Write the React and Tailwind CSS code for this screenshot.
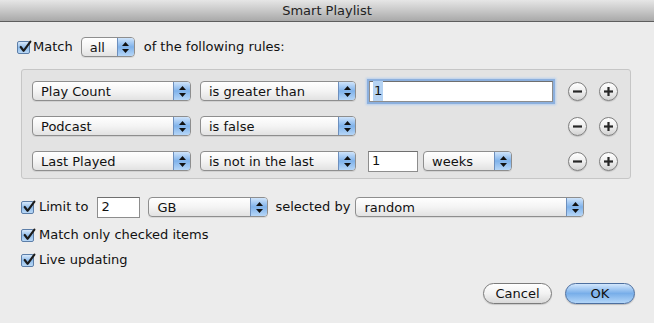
import React from 'react';

const font = { fontFamily: '"DejaVu Sans", "Liberation Sans", sans-serif' };

function Checkbox() {
  return (
    <div className="w-[13px] h-[13px] shrink-0 rounded-[2px] border border-[#5c7ea8] bg-gradient-to-b from-[#d8e9fb] via-[#8fbcea] to-[#b9d8f6] relative">
      <svg viewBox="0 0 13 13" className="absolute -top-[2px] left-0 w-[14px] h-[14px]">
        <path d="M2.5 6.5 L5.2 10 L11.5 1.5" fill="none" stroke="#1b1b1b" strokeWidth="2" strokeLinecap="round" strokeLinejoin="round" />
      </svg>
    </div>
  );
}

function Popup({ w, text }) {
  return (
    <div
      className="h-[20px] shrink-0 flex items-stretch rounded-[4px] border border-[#8e8e8e] bg-gradient-to-b from-white via-[#f4f4f4] to-[#e2e2e2] shadow-[0_1px_0_rgba(0,0,0,0.08)] overflow-hidden"
      style={{ width: w }}
    >
      <div className="flex-1 flex items-center pl-[8px] text-[13px] text-[#111] leading-none">{text}</div>
      <div className="w-[17px] flex flex-col items-center justify-center gap-[3px] border-l border-[#6d8fbd] bg-gradient-to-b from-[#cfe4fb] via-[#7fb2ea] to-[#b6d6f7]">
        <svg width="7" height="4" viewBox="0 0 7 4"><path d="M3.5 0 L7 4 L0 4 Z" fill="#111" /></svg>
        <svg width="7" height="4" viewBox="0 0 7 4"><path d="M0 0 L7 0 L3.5 4 Z" fill="#111" /></svg>
      </div>
    </div>
  );
}

function Field({ w, text, focus }) {
  return (
    <div
      className={
        'h-[21px] shrink-0 flex items-center pl-[3px] bg-white border border-[#8d8d8d] border-t-[#6f6f6f] text-[13px] text-[#111] ' +
        (focus ? 'shadow-[0_0_0_2px_#8cb0de,0_0_2px_3px_#b7cfee]' : '')
      }
      style={{ width: w }}
    >
      {focus ? <span className="bg-[#b5d3f3] px-[1px]">{text}</span> : text}
    </div>
  );
}

function RoundBtn({ plus }) {
  return (
    <div className="w-[19px] h-[19px] rounded-full border border-[#7f7f7f] bg-gradient-to-b from-white via-[#eeeeee] to-[#d2d2d2] flex items-center justify-center shadow-[0_1px_1px_rgba(0,0,0,0.15)]">
      <svg width="11" height="11" viewBox="0 0 11 11">
        <path d="M1 5.5 H10" stroke="#262626" strokeWidth="2.2" />
        {plus && <path d="M5.5 1 V10" stroke="#262626" strokeWidth="2.2" />}
      </svg>
    </div>
  );
}

function Rule({ a, b, children }) {
  return (
    <div className="h-[22px] flex items-center">
      <Popup w={159} text={a} />
      <div className="ml-[9px]"><Popup w={156} text={b} /></div>
      <div className="flex-1 flex items-center">{children}</div>
      <div className="flex items-center gap-[12px]">
        <RoundBtn />
        <RoundBtn plus />
      </div>
    </div>
  );
}

export default function App() {
  return (
    <div className="w-[654px] h-[323px] bg-[#ececec] overflow-hidden text-[#111]" style={font}>
      <div className="h-[22px] flex items-center justify-center bg-gradient-to-b from-[#e6e6e6] via-[#c8c8c8] to-[#a9a9a9] border-b border-[#5e5e5e] text-[13px] text-[#222]">
        Smart Playlist
      </div>

      <div className="mt-[15px] h-[20px] flex items-center pl-[17px] text-[13px]">
        <Checkbox />
        <span className="ml-[3px]">Match</span>
        <div className="ml-[8px]"><Popup w={54} text="all" /></div>
        <span className="ml-[9px]">of the following rules:</span>
      </div>

      <div className="mt-[12px] ml-[21px] w-[610px] h-[110px] rounded-[3px] border border-[#c6c6c6] bg-[#e3e3e3] pl-[10px] pr-[12px] pt-[10px] flex flex-col gap-[13px]">
        <Rule a="Play Count" b="is greater than">
          <div className="ml-[13px]"><Field w={184} text="1" focus /></div>
        </Rule>
        <Rule a="Podcast" b="is false" />
        <Rule a="Last Played" b="is not in the last">
          <div className="ml-[12px]"><Field w={50} text="1" /></div>
          <div className="ml-[5px]"><Popup w={89} text="weeks" /></div>
        </Rule>
      </div>

      <div className="mt-[17px] h-[22px] flex items-center pl-[21px] text-[13px]">
        <Checkbox />
        <span className="ml-[5px]">Limit to</span>
        <div className="ml-[9px]"><Field w={43} text="2" /></div>
        <div className="ml-[8px]"><Popup w={120} text="GB" /></div>
        <span className="ml-[7px]">selected by</span>
        <div className="ml-[5px]"><Popup w={229} text="random" /></div>
      </div>

      <div className="mt-[7px] h-[20px] flex items-center pl-[21px] text-[13px]">
        <Checkbox />
        <span className="ml-[5px]">Match only checked items</span>
      </div>

      <div className="mt-[5px] h-[20px] flex items-center pl-[21px] text-[13px]">
        <Checkbox />
        <span className="ml-[5px]">Live updating</span>
      </div>

      <div className="mt-[13px] flex justify-end items-center gap-[13px] pr-[19px]">
        <div className="w-[69px] h-[21px] rounded-full border border-[#7b7b7b] bg-gradient-to-b from-white via-[#f2f2f2] to-[#d9d9d9] flex items-center justify-center text-[13px] shadow-[0_1px_1px_rgba(0,0,0,0.15)]">
          Cancel
        </div>
        <div className="w-[70px] h-[21px] rounded-full border border-[#4d6f9f] bg-gradient-to-b from-[#d3e7fc] via-[#78aee9] to-[#b3d6f8] flex items-center justify-center text-[13px] shadow-[0_1px_1px_rgba(0,0,0,0.2)]">
          OK
        </div>
      </div>
    </div>
  );
}
